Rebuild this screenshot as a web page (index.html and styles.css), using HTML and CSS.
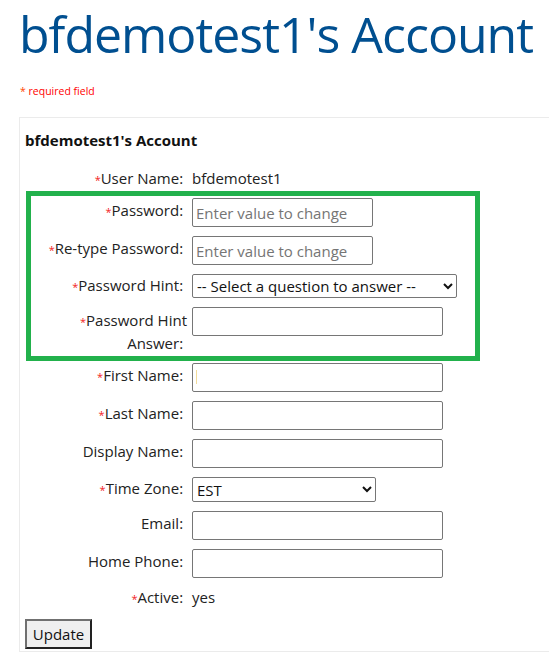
FILE: index.html
```html
<!DOCTYPE html>
<html lang="en">
<head>
<meta charset="utf-8">
<title>bfdemotest1's Account</title>
<link rel="stylesheet" href="styles.css">
</head>
<body>
<div class="page">
  <h1 class="page-title">bfdemotest1's Account</h1>
  <p class="req-note"><span class="req-star">*</span> required field</p>
  <div class="panel">
    <h2 class="panel-title">bfdemotest1's Account</h2>
    <div class="form">
      <div class="label"><span class="star">*</span>User Name:&nbsp;</div>
      <div class="value">bfdemotest1</div>

      <div class="label for-field"><span class="star">*</span>Password:&nbsp;</div>
      <div class="value"><input class="field short" type="password" placeholder="Enter value to change"></div>

      <div class="label for-field"><span class="star">*</span>Re-type Password:&nbsp;</div>
      <div class="value"><input class="field short" type="password" placeholder="Enter value to change"></div>

      <div class="label for-select"><span class="star">*</span>Password Hint:&nbsp;</div>
      <div class="value"><select class="select hint"><option>-- Select a question to answer --</option></select></div>

      <div class="label for-field two-line"><span class="star">*</span>Password Hint<br>Answer:&nbsp;</div>
      <div class="value"><input class="field" type="text"></div>

      <div class="label for-field"><span class="star">*</span>First Name:&nbsp;</div>
      <div class="value caret-wrap"><input class="field" type="text"><span class="caret"></span></div>

      <div class="label for-field"><span class="star">*</span>Last Name:&nbsp;</div>
      <div class="value"><input class="field" type="text"></div>

      <div class="label for-field">Display Name:&nbsp;</div>
      <div class="value"><input class="field" type="text"></div>

      <div class="label for-select"><span class="star">*</span>Time Zone:&nbsp;</div>
      <div class="value"><select class="select tz"><option>EST</option></select></div>

      <div class="label for-field">Email:&nbsp;</div>
      <div class="value"><input class="field" type="text"></div>

      <div class="label for-field">Home Phone:&nbsp;</div>
      <div class="value"><input class="field" type="text"></div>

      <div class="label"><span class="star">*</span>Active:&nbsp;</div>
      <div class="value">yes</div>
    </div>
    <button class="btn" type="button">Update</button>
    <div class="highlight"></div>
  </div>
</div>
</body>
</html>
```

FILE: styles.css
```css
html, body {
  margin: 0;
  padding: 0;
  background: #fff;
}
body {
  overflow-x: hidden;
  font-family: "Open Sans", "Noto Sans", sans-serif;
  color: #222;
}
.page {
  padding-left: 19px;
}
.page-title {
  margin: 0;
  padding-top: 2px;
  font-size: 50px;
  line-height: 64px;
  font-weight: 400;
  color: #004f90;
  letter-spacing: -1px;
}
.req-note {
  margin: 18px 0 0 1px;
  font-size: 10.5px;
  line-height: 14px;
  color: #ff0000;
}
.req-star {
  color: #ff4500;
}
.panel {
  position: relative;
  margin-top: 19px;
  width: 560px;
  border: 1px solid #ebebeb;
  padding: 12px 5px 2px 5px;
  box-sizing: border-box;
}
.panel-title {
  margin: 0 0 18px 0;
  font-size: 15px;
  line-height: 20px;
  font-weight: 700;
  color: #111;
}
.form {
  display: grid;
  grid-template-columns: 162px auto;
  column-gap: 5px;
  row-gap: 9px;
  align-items: start;
  font-size: 15px;
  line-height: 21px;
}
.label {
  text-align: right;
}
.label.for-field {
  padding-top: 2px;
}
.label.for-select {
  padding-top: 1px;
}
.label.two-line {
  line-height: 22.5px;
}
.star {
  color: #f21c1c;
  font-size: 11px;
  line-height: 0;
}
.value {
  display: flex;
  align-items: flex-start;
}
.field {
  box-sizing: border-box;
  width: 251px;
  height: 29px;
  border: 1px solid #767676;
  border-radius: 2px;
  padding: 0 3px;
  font-family: inherit;
  font-size: 15px;
  color: #222;
  background: #fff;
}
.field.short {
  width: 181px;
}
.field::placeholder {
  color: #757575;
}
.caret-wrap {
  position: relative;
}
.caret {
  position: absolute;
  left: 4px;
  top: 7px;
  width: 1px;
  height: 14px;
  background: #f3dc9a;
}
.select {
  box-sizing: border-box;
  height: 25px;
  border: 1px solid #767676;
  border-radius: 2px;
  font-family: inherit;
  font-size: 15px;
  color: #111;
  background: #fff;
}
.select.hint {
  width: 265px;
  height: 24px;
}
.select.tz {
  width: 184px;
}
.btn {
  margin-top: 11px;
  height: 30px;
  width: 67px;
  padding: 0;
  font-family: inherit;
  font-size: 15px;
  color: #111;
  background: #efefef;
  border: 2px solid;
  border-color: #707070 #222 #222 #707070;
  display: block;
}
.highlight {
  position: absolute;
  left: 6px;
  top: 73px;
  width: 454px;
  height: 170px;
  box-sizing: border-box;
  border: 5px solid #22b14c;
  pointer-events: none;
}
```
